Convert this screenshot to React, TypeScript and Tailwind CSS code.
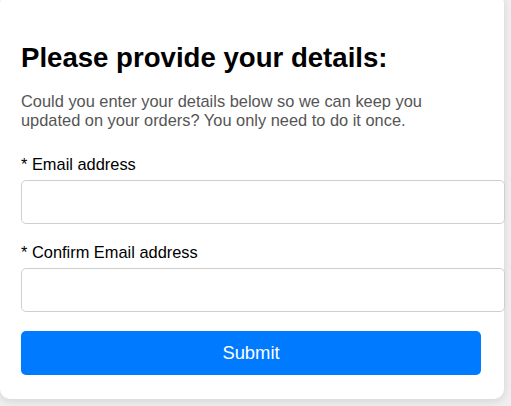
export default function App() {
  return (
    <div className="min-h-screen w-full overflow-hidden bg-[#efefef] font-['Liberation_Sans',Arial,sans-serif]">
      <div className="-mt-[6px] w-[504px] rounded-[10px] bg-white pl-[21px] pr-[23px] pt-[48px] pb-[24px] shadow-[0_2px_8px_rgba(0,0,0,0.12)]">
        <h1 className="text-[27.6px] font-bold leading-[32px] text-black">
          Please provide your details:
        </h1>
        <p className="mt-[18px] max-w-[410px] text-[16.4px] leading-[19px] text-[#555]">
          Could you enter your details below so we can keep you updated on your orders? You only
          need to do it once.
        </p>

        <form className="mt-[24px] flex flex-col">
          <label className="mb-[6px] text-[16.4px] leading-[20px] text-black">* Email address</label>
          <input
            type="email"
            className="h-[44px] w-[484px] rounded-[5px] border border-[#cfcfcf] bg-white px-3 outline-none"
          />

          <label className="mb-[6px] mt-[18px] text-[16.4px] leading-[20px] text-black">
            * Confirm Email address
          </label>
          <input
            type="email"
            className="h-[44px] w-[484px] rounded-[5px] border border-[#cfcfcf] bg-white px-3 outline-none"
          />

          <button
            type="button"
            className="mt-[19px] h-[44px] w-[460px] rounded-[5px] bg-[#007bff] text-[18.4px] text-white"
          >
            Submit
          </button>
        </form>
      </div>
    </div>
  );
}
